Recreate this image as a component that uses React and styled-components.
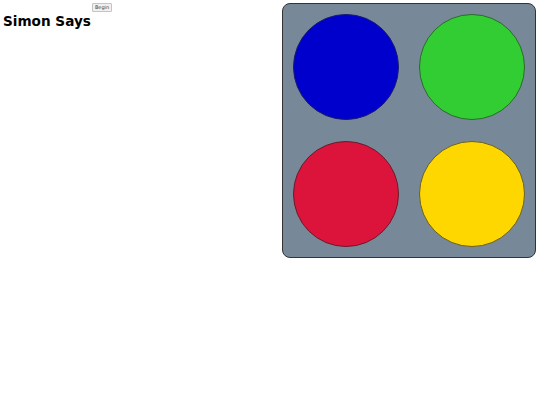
import React from "react";
import styled, { createGlobalStyle } from "styled-components";

const Global = createGlobalStyle`
  html, body { margin: 0; padding: 0; background: #fff; }
  body { font-family: "DejaVu Sans", sans-serif; }
`;

const Page = styled.div`
  display: flex;
  justify-content: space-between;
  align-items: flex-start;
  padding: 3px 4px 0 3px;
`;

const Side = styled.div`
  display: flex;
  flex-direction: column;
  align-items: flex-start;
`;

const BeginButton = styled.button`
  margin-left: 89px;
  width: 20px;
  height: 9px;
  padding: 0;
  font-family: "DejaVu Sans", sans-serif;
  font-size: 5px;
  line-height: 7px;
  color: #444;
  background: #f0f0f0;
  border: 1px solid #c4c4c4;
  border-radius: 1px;
  outline: none;
`;

const Title = styled.h1`
  margin: 1px 0 0;
  font-family: "DejaVu Sans", sans-serif;
  font-weight: bold;
  font-size: 13.6px;
  line-height: 17px;
  color: #000;
`;

const Board = styled.div`
  display: grid;
  grid-template-columns: repeat(2, 106px);
  grid-template-rows: repeat(2, 106px);
  gap: 21px 20px;
  padding: 10px;
  background: #778899;
  border: 1px solid #333;
  border-radius: 8px;
`;

const Pad = styled.div`
  width: 106px;
  height: 106px;
  border-radius: 50%;
  background: ${(p) => p.$color};
  border: 1px solid ${(p) => p.$edge};
  box-sizing: border-box;
`;

const pads = [
  { color: "#0000cd", edge: "#1a1a6e" },
  { color: "#32cd32", edge: "#2c6a2c" },
  { color: "#dc143c", edge: "#6a1a2a" },
  { color: "#ffd700", edge: "#6a6020" },
];

export default function App() {
  return (
    <>
      <Global />
      <Page>
        <Side>
          <BeginButton>Begin</BeginButton>
          <Title>Simon Says</Title>
        </Side>
        <Board>
          {pads.map((p, i) => (
            <Pad key={i} $color={p.color} $edge={p.edge} />
          ))}
        </Board>
      </Page>
    </>
  );
}
